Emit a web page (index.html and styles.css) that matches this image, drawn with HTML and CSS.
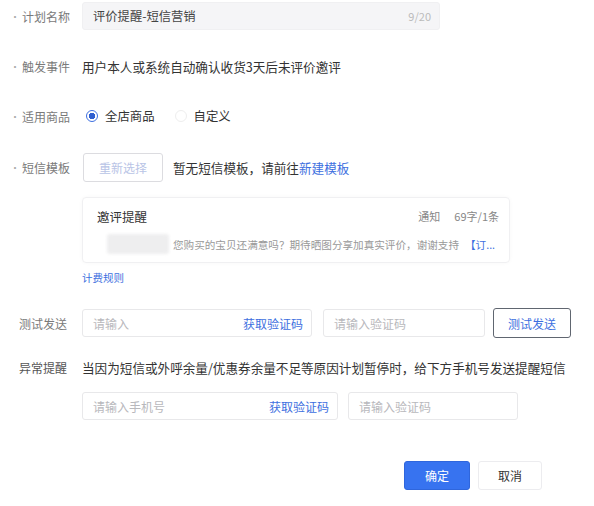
FILE: index.html
```html
<!DOCTYPE html>
<html lang="zh">
<head>
<meta charset="utf-8">
<link rel="stylesheet" href="styles.css">
</head>
<body>
<div class="form">
  <div class="row r1">
    <div class="label"><span class="dot">•</span>计划名称</div>
    <div class="field">
      <div class="input filled name-input"><span class="val">评价提醒-短信营销</span><span class="count">9/20</span></div>
    </div>
  </div>
  <div class="row r2">
    <div class="label"><span class="dot">•</span>触发事件</div>
    <div class="field text">用户本人或系统自动确认收货3天后未评价邀评</div>
  </div>
  <div class="row r3">
    <div class="label"><span class="dot">•</span>适用商品</div>
    <div class="field radios">
      <span class="radio on"></span><span class="rlabel">全店商品</span>
      <span class="radio"></span><span class="rlabel">自定义</span>
    </div>
  </div>
  <div class="row r4">
    <div class="label"><span class="dot">•</span>短信模板</div>
    <div class="field tpl">
      <span class="btn ghost">重新选择</span>
      <span class="text">暂无短信模板，请前往<span class="link">新建模板</span></span>
    </div>
  </div>
  <div class="card">
    <div class="card-top"><span class="card-title">邀评提醒</span><span class="card-meta"><span>通知</span><span>69字/1条</span></span></div>
    <div class="card-body"><span class="blur"></span><span class="msg">您购买的宝贝还满意吗？期待晒图分享加真实评价，谢谢支持</span><span class="link">【订...</span></div>
  </div>
  <div class="rule link">计费规则</div>
  <div class="row r5">
    <div class="label plain">测试发送</div>
    <div class="field inputs">
      <div class="input w1"><span class="ph">请输入</span><span class="link">获取验证码</span></div>
      <div class="input w2"><span class="ph">请输入验证码</span></div>
      <span class="btn outline">测试发送</span>
    </div>
  </div>
  <div class="row r6">
    <div class="label plain dark">异常提醒</div>
    <div class="field text">当因为短信或外呼余量/优惠券余量不足等原因计划暂停时，给下方手机号发送提醒短信</div>
  </div>
  <div class="row r7">
    <div class="label"></div>
    <div class="field inputs">
      <div class="input w3"><span class="ph">请输入手机号</span><span class="link">获取验证码</span></div>
      <div class="input w4"><span class="ph">请输入验证码</span></div>
    </div>
  </div>
  <div class="footer">
    <span class="btn primary">确定</span>
    <span class="btn cancel">取消</span>
  </div>
</div>
</body>
</html>
```
FILE: styles.css
```css
html, body { margin: 0; padding: 0; background: #fff; }
body {
  font-family: "Noto Sans CJK SC", "Noto Sans", sans-serif;
  font-size: 12px;
  color: #333;
  width: 594px;
  height: 506px;
  overflow: hidden;
}
.form { padding-left: 8px; padding-top: 2px; }
.row { display: flex; align-items: center; }
.label {
  width: 74px;
  flex: none;
  color: #7a7a7a;
  display: flex;
  align-items: center;
  white-space: nowrap;
}
.label.plain { padding-left: 11px; width: 63px; }
.label.dark { color: #555; }
.dot { color: #aaa; width: 12px; font-size: 10px; padding-left: 2px; }
.field { display: flex; align-items: center; }
.text { color: #333; font-size: 12.6px; white-space: nowrap; }
.link { color: #3d6fe0; }
.input {
  box-sizing: border-box;
  height: 28px;
  border: 1px solid #e8e8ea;
  border-radius: 3px;
  display: flex;
  align-items: center;
  justify-content: space-between;
  padding: 0 8px 0 10px;
  background: #fff;
}
.input.filled { background: #f5f5f7; border-color: #f0f0f2; }
.name-input { width: 358px; }
.val { color: #444; font-size: 12.3px; }
.count { color: #bbb; font-size: 11px; }
.ph { color: #b8b8bc; }
.r1 { height: 28px; }
.r2 { margin-top: 22px; height: 28px; }
.r3 { margin-top: 22px; height: 28px; }
.radio {
  width: 12px; height: 12px; border-radius: 50%;
  box-sizing: border-box;
  border: 1px solid #eee;
  margin-left: 4px;
  margin-right: 7px;
}
.radio.on { border: 1px solid #3d6fe0; background: radial-gradient(circle, #2f5fd0 0 3px, #fff 3.5px); }
.rlabel { margin-right: 16px; font-size: 12.4px; }
.r4 { margin-top: 22px; height: 30px; }
.btn {
  box-sizing: border-box;
  display: inline-flex;
  align-items: center;
  justify-content: center;
  border-radius: 3px;
  white-space: nowrap;
}
.btn.ghost {
  width: 80px; height: 29px;
  border: 1px solid #dcdce0;
  color: #b9c4e6;
  margin-right: 10px;
  margin-left: 1px;
}
.card {
  margin-left: 74px;
  margin-top: 15px;
  width: 428px;
  height: 66px;
  box-sizing: border-box;
  border: 1px solid #f0f0f2;
  border-radius: 4px;
  padding: 9px 10px 0 14px;
  box-shadow: 0 0 4px rgba(0,0,0,0.03);
}
.card-top { display: flex; justify-content: space-between; align-items: center; height: 18px; }
.card-title { color: #333; font-size: 12.5px; }
.card-meta { color: #888; font-size: 11px; display: flex; gap: 14px; }
.card-body { display: flex; align-items: center; margin-top: 9px; font-size: 10.6px; color: #999; white-space: nowrap; }
.blur { width: 62px; height: 20px; background: #eeeeef; border-radius: 3px; margin-left: 10px; margin-right: 4px; filter: blur(1.5px); }
.card-body .link { margin-left: 6px; }
.rule { margin-left: 74px; margin-top: 7px; font-size: 10.5px; height: 16px; line-height: 16px; }
.r5 { margin-top: 22px; height: 30px; }
.inputs { gap: 10px; }
.w1 { width: 230px; }
.w2 { width: 162px; margin-left: 1px; }
.btn.outline {
  width: 78px; height: 30px;
  border: 1px solid #606670;
  color: #3d6fe0;
  margin-left: -2px;
}
.r6 { margin-top: 20px; height: 18px; }
.r7 { margin-top: 15px; height: 30px; }
.w3 { width: 256px; }
.w4 { width: 170px; }
.footer {
  display: flex;
  justify-content: flex-end;
  gap: 8px;
  padding-right: 52px;
  margin-top: 40px;
}
.btn.primary {
  width: 66px; height: 29px;
  background: #3773f0;
  color: #fff;
  border: 1px solid #2f66dc;
}
.btn.cancel {
  width: 64px; height: 29px;
  border: 1px solid #ececef;
  color: #333;
}
```
